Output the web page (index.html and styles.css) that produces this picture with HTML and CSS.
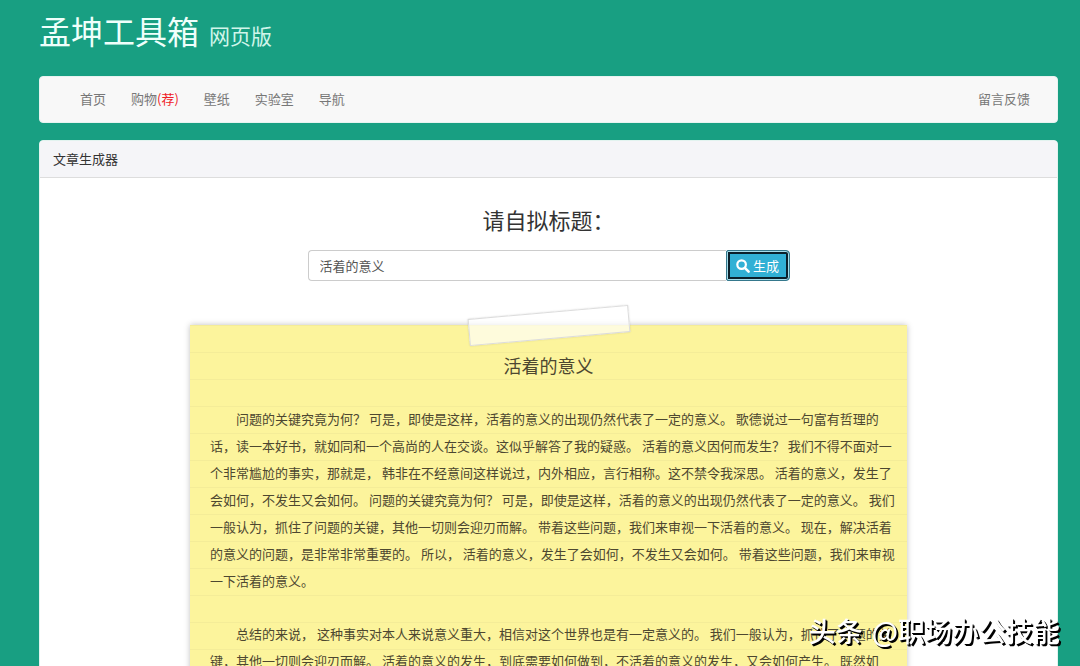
FILE: index.html
```
<!DOCTYPE html>
<html lang="zh-CN">
<head>
<meta charset="utf-8">
<meta name="viewport" content="width=device-width, initial-scale=1">
<title>孟坤工具箱 网页版</title>
<link rel="stylesheet" href="styles.css">
</head>
<body>
<div class="container">
  <header class="site-header">
    <h1 class="site-title">孟坤工具箱 <small class="site-sub">网页版</small></h1>
  </header>
  <nav class="navbar">
    <div class="nav-links">
      <a href="#">首页</a>
      <a href="#">购物<span class="hot">(荐)</span></a>
      <a href="#">壁纸</a>
      <a href="#">实验室</a>
      <a href="#">导航</a>
    </div>
    <a href="#">留言反馈</a>
  </nav>
  <main class="panel">
    <div class="panel-heading">文章生成器</div>
    <div class="panel-body">
      <form class="generator">
        <label class="generator-label" for="topic">请自拟标题：</label>
        <div class="input-group">
          <input class="topic" id="topic" type="text" value="活着的意义">
          <button class="generate" type="button">
            <svg class="icon" viewBox="0 0 14 14" aria-hidden="true"><circle cx="5.6" cy="5.6" r="4.3" fill="none" stroke="currentColor" stroke-width="2.2"/><path d="M8.8 8.8 12.6 12.6" stroke="currentColor" stroke-width="2.6" stroke-linecap="round"/></svg>
            生成
          </button>
        </div>
      </form>
      <article class="note">
        <div class="tape"></div>
        <h2 class="note-title">活着的意义</h2>
        <p>问题的关键究竟为何？ 可是，即使是这样，活着的意义的出现仍然代表了一定的意义。 歌德说过一句富有哲理的话，读一本好书，就如同和一个高尚的人在交谈。这似乎解答了我的疑惑。 活着的意义因何而发生？ 我们不得不面对一个非常尴尬的事实，那就是， 韩非在不经意间这样说过，内外相应，言行相称。这不禁令我深思。 活着的意义，发生了会如何，不发生又会如何。 问题的关键究竟为何？ 可是，即使是这样，活着的意义的出现仍然代表了一定的意义。 我们一般认为，抓住了问题的关键，其他一切则会迎刃而解。 带着这些问题，我们来审视一下活着的意义。 现在，解决活着的意义的问题，是非常非常重要的。 所以， 活着的意义，发生了会如何，不发生又会如何。 带着这些问题，我们来审视一下活着的意义。</p>
        <p>总结的来说， 这种事实对本人来说意义重大，相信对这个世界也是有一定意义的。 我们一般认为，抓住了问题的关键，其他一切则会迎刃而解。 活着的意义的发生，到底需要如何做到，不活着的意义的发生，又会如何产生。 既然如</p>
      </article>
    </div>
  </main>
</div>
<div class="watermark"><span>头条</span><span>@职场办公技能</span></div>
</body>
</html>
```
FILE: styles.css
```
* { box-sizing: border-box; }

body {
  margin: 0;
  height: 100vh;
  overflow: hidden;
  background: #189f82;
  color: #333;
  font: 13px/18px "Noto Sans CJK SC", sans-serif;
}

.container { padding: 0 22px 0 39px; }

.site-header { padding: 10px 0 26px; }

.site-title {
  display: flex;
  align-items: baseline;
  gap: 10px;
  margin: 0;
  color: #effffb;
  font-size: 32px;
  font-weight: 400;
  line-height: 40px;
}

.site-sub { color: #d0f5ea; font-size: 21px; line-height: 24px; }

.navbar {
  display: flex;
  align-items: center;
  justify-content: space-between;
  height: 47px;
  margin-bottom: 17px;
  padding: 0 27px 2px 40px;
  border: 1px solid #e7f3f0;
  border-radius: 4px;
  background: #f8f8f8;
}

.navbar a { color: #777; text-decoration: none; }

.nav-links { display: flex; gap: 25px; }

.navbar .hot { color: #f01c28; }

.panel {
  border: 1px solid #e2f3ef;
  border-radius: 4px;
  background: #fff;
}

.panel-heading {
  padding: 9px 13px;
  border-bottom: 1px solid #ddd;
  border-radius: 3px 3px 0 0;
  background: #f5f5f8;
}

.panel-body { padding: 25px 20px; }

.generator {
  display: flex;
  flex-direction: column;
  align-items: center;
  gap: 15px;
}

.generator-label { font-size: 22px; line-height: 32px; }

.input-group { display: flex; width: 100%; max-width: 482px; height: 31px; }

.topic {
  flex: 1;
  min-width: 0;
  padding: 0 11px;
  border: 1px solid #ccc;
  border-right: 0;
  border-radius: 4px 0 0 4px;
  background: #fff;
  color: #555;
  font: inherit;
}

.generate {
  display: flex;
  align-items: center;
  justify-content: center;
  gap: 3px;
  width: 64px;
  padding: 0;
  border: 1px solid #35788c;
  border-radius: 2px 4px 4px 2px;
  background: #31b0d5;
  box-shadow: inset 0 0 0 1px #a5dcea, inset 0 0 0 3px #0a202b;
  color: #fff;
  font: inherit;
}

.icon { width: 14px; height: 14px; }

.note {
  position: relative;
  max-width: 717px;
  margin: 44px auto 0;
  padding: 27px 6px 27px 20px;
  background: linear-gradient(#fcf49c 26px, #f4ec98 26px) 0 1px / 100% 27px;
  box-shadow: 0 0 6px rgba(0, 0, 0, 0.25);
  color: #4d4730;
  line-height: 27px;
}

.note p { margin: 0 0 26px; text-indent: 2em; }

.note-title {
  margin: 0 0 26px;
  padding-right: 14px;
  font-size: 18px;
  font-weight: 400;
  line-height: 27px;
  text-align: center;
}

.tape {
  position: absolute;
  top: -13px;
  left: 50%;
  width: 161px;
  height: 27px;
  border: 1px solid #dcdcdc;
  background: rgba(255, 255, 255, 0.65);
  box-shadow: 0 0 2px rgba(0, 0, 0, 0.15);
  transform: translateX(-50%) rotate(-5deg);
}

.watermark {
  position: fixed;
  right: 20px;
  bottom: 17px;
  display: flex;
  gap: 9px;
  color: #fff;
  font-size: 27px;
  font-weight: 500;
  line-height: 36px;
  text-shadow: 1px 1px 0 #000, 2px 2px 0 #000;
}
```
